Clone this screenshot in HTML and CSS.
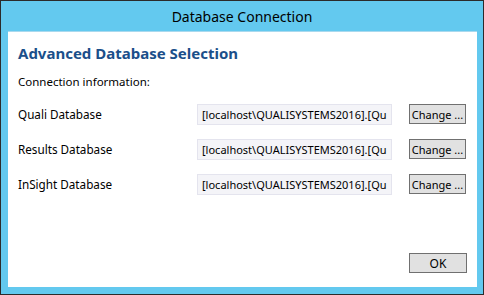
FILE: index.html
```html
<!DOCTYPE html>
<html>
<head>
<meta charset="utf-8">
<link rel="stylesheet" href="styles.css">
</head>
<body>
<div class="window">
  <div class="titlebar">Database Connection</div>
  <div class="content">
    <h1 class="heading">Advanced Database Selection</h1>
    <div class="subtitle">Connection information:</div>
    <div class="rows">
      <div class="row">
        <span class="label">Quali Database</span>
        <div class="field">[localhost\QUALISYSTEMS2016].[Qu</div>
        <button class="btn change">Change ...</button>
      </div>
      <div class="row">
        <span class="label">Results Database</span>
        <div class="field">[localhost\QUALISYSTEMS2016].[Qu</div>
        <button class="btn change">Change ...</button>
      </div>
      <div class="row">
        <span class="label">InSight Database</span>
        <div class="field">[localhost\QUALISYSTEMS2016].[Qu</div>
        <button class="btn change">Change ...</button>
      </div>
    </div>
    <div class="footer">
      <button class="btn ok">OK</button>
    </div>
  </div>
</div>
</body>
</html>
```

FILE: styles.css
```css
html, body {
  margin: 0;
  padding: 0;
}
body {
  width: 484px;
  height: 295px;
  font-family: "Noto Sans", "Open Sans", sans-serif;
}
.window {
  box-sizing: border-box;
  width: 484px;
  height: 295px;
  border: 1px solid #2b2b2b;
  background: #63c9ef;
  display: flex;
  flex-direction: column;
}
.titlebar {
  height: 30px;
  display: flex;
  align-items: center;
  justify-content: center;
  font-size: 14px;
  color: #000;
}
.content {
  flex: 1;
  margin: 0 6px 7px 7px;
  background: #fff;
  border-top: 1px solid #a9d9ee;
  display: flex;
  flex-direction: column;
  padding: 0 10px;
}
.heading {
  margin: 10px 0 0 0;
  font-size: 15px;
  font-weight: bold;
  color: #1b4f8a;
  line-height: 22px;
}
.subtitle {
  margin-top: 10px;
  font-size: 11.5px;
  line-height: 16px;
  color: #000;
}
.rows {
  margin-top: 13px;
  display: flex;
  flex-direction: column;
  gap: 13px;
}
.row {
  display: flex;
  align-items: center;
  height: 22px;
}
.label {
  width: 179px;
  font-size: 11.7px;
  color: #000;
}
.field {
  box-sizing: border-box;
  width: 195px;
  height: 21px;
  border: 1px solid #e4e4ee;
  background: #f4f4f8;
  font-size: 11px;
  line-height: 19px;
  padding-left: 4px;
  white-space: nowrap;
  overflow: hidden;
  color: #000;
}
.btn {
  box-sizing: border-box;
  font-family: inherit;
  font-size: 11px;
  background: #e1e1e1;
  border: 1px solid #707070;
  color: #000;
  padding: 0;
  height: 20px;
}
.change {
  margin-left: 17px;
  width: 57px;
}
.footer {
  margin-top: auto;
  margin-bottom: 14px;
  display: flex;
  justify-content: flex-end;
}
.ok {
  width: 58px;
  font-size: 12px;
}
```
